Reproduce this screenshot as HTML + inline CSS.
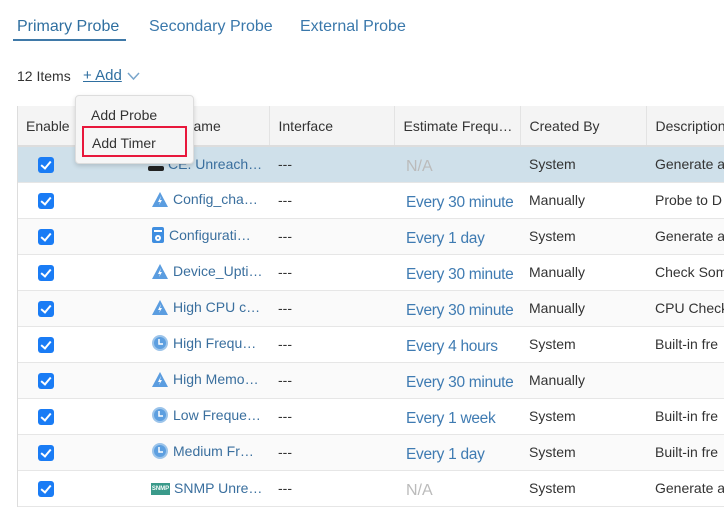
<!DOCTYPE html>
<html><head><meta charset="utf-8"><style>
*{box-sizing:border-box;margin:0;padding:0}
body{width:724px;height:507px;overflow:hidden;background:#fff;font-family:"Liberation Sans",sans-serif;color:#333;position:relative}
.tab{position:absolute;top:18px;font-size:16px;color:#3a78ab}
.tab.act{color:#2f6fa0}
.uline{position:absolute;left:13px;top:39px;width:113px;height:2px;background:#3f79a8}
.items{position:absolute;left:17px;top:68px;font-size:14px;color:#333}
.add{position:absolute;left:83px;top:67px;font-size:15px;color:#2f6fa0;text-decoration:underline}
table{position:absolute;left:17px;top:106px;border-collapse:collapse;table-layout:fixed;width:740px;font-size:14px}
th{height:40px;background:#f4f4f4;font-weight:normal;text-align:left;padding-left:9px;color:#333;border-right:1px solid #e3e3e3;border-bottom:2px solid #ddd;white-space:nowrap;overflow:hidden}
td{height:36px;padding-left:9px;border-bottom:1px solid #e6e6e6;white-space:nowrap;overflow:hidden}
tr.sel td{background:#cfe0ea}
tr.alt td{background:#fafafa}
.cb{display:inline-block;width:16px;height:16px;background:#1a7cf5;border-radius:3px;position:relative;margin-left:12px;vertical-align:middle}
.cb:after{content:"";position:absolute;left:5px;top:2px;width:4px;height:8px;border:solid #fff;border-width:0 2.5px 2.5px 0;transform:rotate(40deg)}
.nm{color:#3a6f9e;font-size:14px}
.ic{display:inline-block;vertical-align:middle;margin-right:4px}
td.freq{color:#3f7bb2;font-size:15.5px;padding-top:5px;letter-spacing:-0.3px;padding-left:12px}
td.na{color:#bbb;font-size:16px;padding-top:5px;padding-left:12px}
.menu{position:absolute;left:75px;top:95px;width:119px;height:69px;background:#f6f6f6;border:1px solid #ddd;border-radius:4px;box-shadow:0 2px 5px rgba(0,0,0,.15);font-size:14px;color:#333}
.menu .a{position:absolute;left:15px;top:11px}
.menu .b{position:absolute;left:6px;top:30px;width:105px;height:31px;border:2px solid #e8173b;padding:7px 0 0 8px}
.outer{position:absolute;left:17px;top:106px;width:1px;height:401px;background:#ddd}
</style></head><body>
<div class="tab act" style="left:17px">Primary Probe</div>
<div class="tab" style="left:149px">Secondary Probe</div>
<div class="tab" style="left:300px">External Probe</div>
<div class="uline"></div>
<div class="items">12 Items</div>
<div class="add">+ Add</div>
<svg style="position:absolute;left:127px;top:71px" width="13" height="10"><path d="M1 2 L6.5 8 L12 2" stroke="#7aa6cc" stroke-width="1.5" fill="none"/></svg>
<table>
<colgroup><col style="width:125px"><col style="width:127px"><col style="width:125px"><col style="width:126px"><col style="width:126px"><col style="width:111px"></colgroup>
<tr><th>Enable</th><th style="padding-left:30px">y Name</th><th>Interface</th><th>Estimate Frequ…</th><th>Created By</th><th>Description</th></tr>
<tr class="sel"><td><span class="cb"></span></td><td style="padding-left:6px"><span class="ic" style="width:16px;height:5px;background:#222;border-radius:2px;margin-top:6px"></span><span class="nm">CE. Unreach…</span></td><td>---</td><td class="na">N/A</td><td>System</td><td>Generate a</td></tr>
<tr><td><span class="cb"></span></td><td><span class="ic"><svg width="18" height="18"><path d="M9 2 L17 17 L1 17 Z" fill="#5b9de0"/><path d="M10 6 L7 12 L9 12 L8 15 L11 10 L9 10 Z" fill="#fff"/></svg></span><span class="nm">Config_cha…</span></td><td>---</td><td class="freq">Every 30 minute</td><td>Manually</td><td>Probe to D</td></tr>
<tr class="alt"><td><span class="cb"></span></td><td><span class="ic"><svg width="14" height="18"><rect x="1" y="1" width="12" height="16" rx="2" fill="#3f8ee0"/><rect x="3" y="4" width="8" height="2" fill="#fff"/><circle cx="7" cy="12" r="3" fill="#fff"/><circle cx="7" cy="12" r="1" fill="#3f8ee0"/></svg></span><span class="nm">Configurati…</span></td><td>---</td><td class="freq">Every 1 day</td><td>System</td><td>Generate a</td></tr>
<tr><td><span class="cb"></span></td><td><span class="ic"><svg width="18" height="18"><path d="M9 2 L17 17 L1 17 Z" fill="#5b9de0"/><path d="M10 6 L7 12 L9 12 L8 15 L11 10 L9 10 Z" fill="#fff"/></svg></span><span class="nm">Device_Upti…</span></td><td>---</td><td class="freq">Every 30 minute</td><td>Manually</td><td>Check Som</td></tr>
<tr class="alt"><td><span class="cb"></span></td><td><span class="ic"><svg width="18" height="18"><path d="M9 2 L17 17 L1 17 Z" fill="#5b9de0"/><path d="M10 6 L7 12 L9 12 L8 15 L11 10 L9 10 Z" fill="#fff"/></svg></span><span class="nm">High CPU c…</span></td><td>---</td><td class="freq">Every 30 minute</td><td>Manually</td><td>CPU Check</td></tr>
<tr><td><span class="cb"></span></td><td><span class="ic"><svg width="18" height="18"><circle cx="9" cy="9" r="8" fill="#9cc4ea"/><circle cx="9" cy="9" r="6" fill="#5d9fe0"/><path d="M8 5 V10 H12" stroke="#fff" stroke-width="1.5" fill="none"/></svg></span><span class="nm">High Frequ…</span></td><td>---</td><td class="freq">Every 4 hours</td><td>System</td><td>Built-in fre</td></tr>
<tr class="alt"><td><span class="cb"></span></td><td><span class="ic"><svg width="18" height="18"><path d="M9 2 L17 17 L1 17 Z" fill="#5b9de0"/><path d="M10 6 L7 12 L9 12 L8 15 L11 10 L9 10 Z" fill="#fff"/></svg></span><span class="nm">High Memo…</span></td><td>---</td><td class="freq">Every 30 minute</td><td>Manually</td><td></td></tr>
<tr><td><span class="cb"></span></td><td><span class="ic"><svg width="18" height="18"><circle cx="9" cy="9" r="8" fill="#9cc4ea"/><circle cx="9" cy="9" r="6" fill="#5d9fe0"/><path d="M8 5 V10 H12" stroke="#fff" stroke-width="1.5" fill="none"/></svg></span><span class="nm">Low Freque…</span></td><td>---</td><td class="freq">Every 1 week</td><td>System</td><td>Built-in fre</td></tr>
<tr class="alt"><td><span class="cb"></span></td><td><span class="ic"><svg width="18" height="18"><circle cx="9" cy="9" r="8" fill="#9cc4ea"/><circle cx="9" cy="9" r="6" fill="#5d9fe0"/><path d="M8 5 V10 H12" stroke="#fff" stroke-width="1.5" fill="none"/></svg></span><span class="nm">Medium Fr…</span></td><td>---</td><td class="freq">Every 1 day</td><td>System</td><td>Built-in fre</td></tr>
<tr><td><span class="cb"></span></td><td><span class="ic" style="width:19px;height:12px;background:#3a9a8a;color:#fff;font-size:6px;font-weight:bold;line-height:12px;text-align:center">SNMP</span><span class="nm">SNMP Unre…</span></td><td>---</td><td class="na">N/A</td><td>System</td><td>Generate a</td></tr>
</table>
<div class="outer"></div>
<div class="menu"><div class="a">Add Probe</div><div class="b">Add Timer</div></div>
</body></html>
